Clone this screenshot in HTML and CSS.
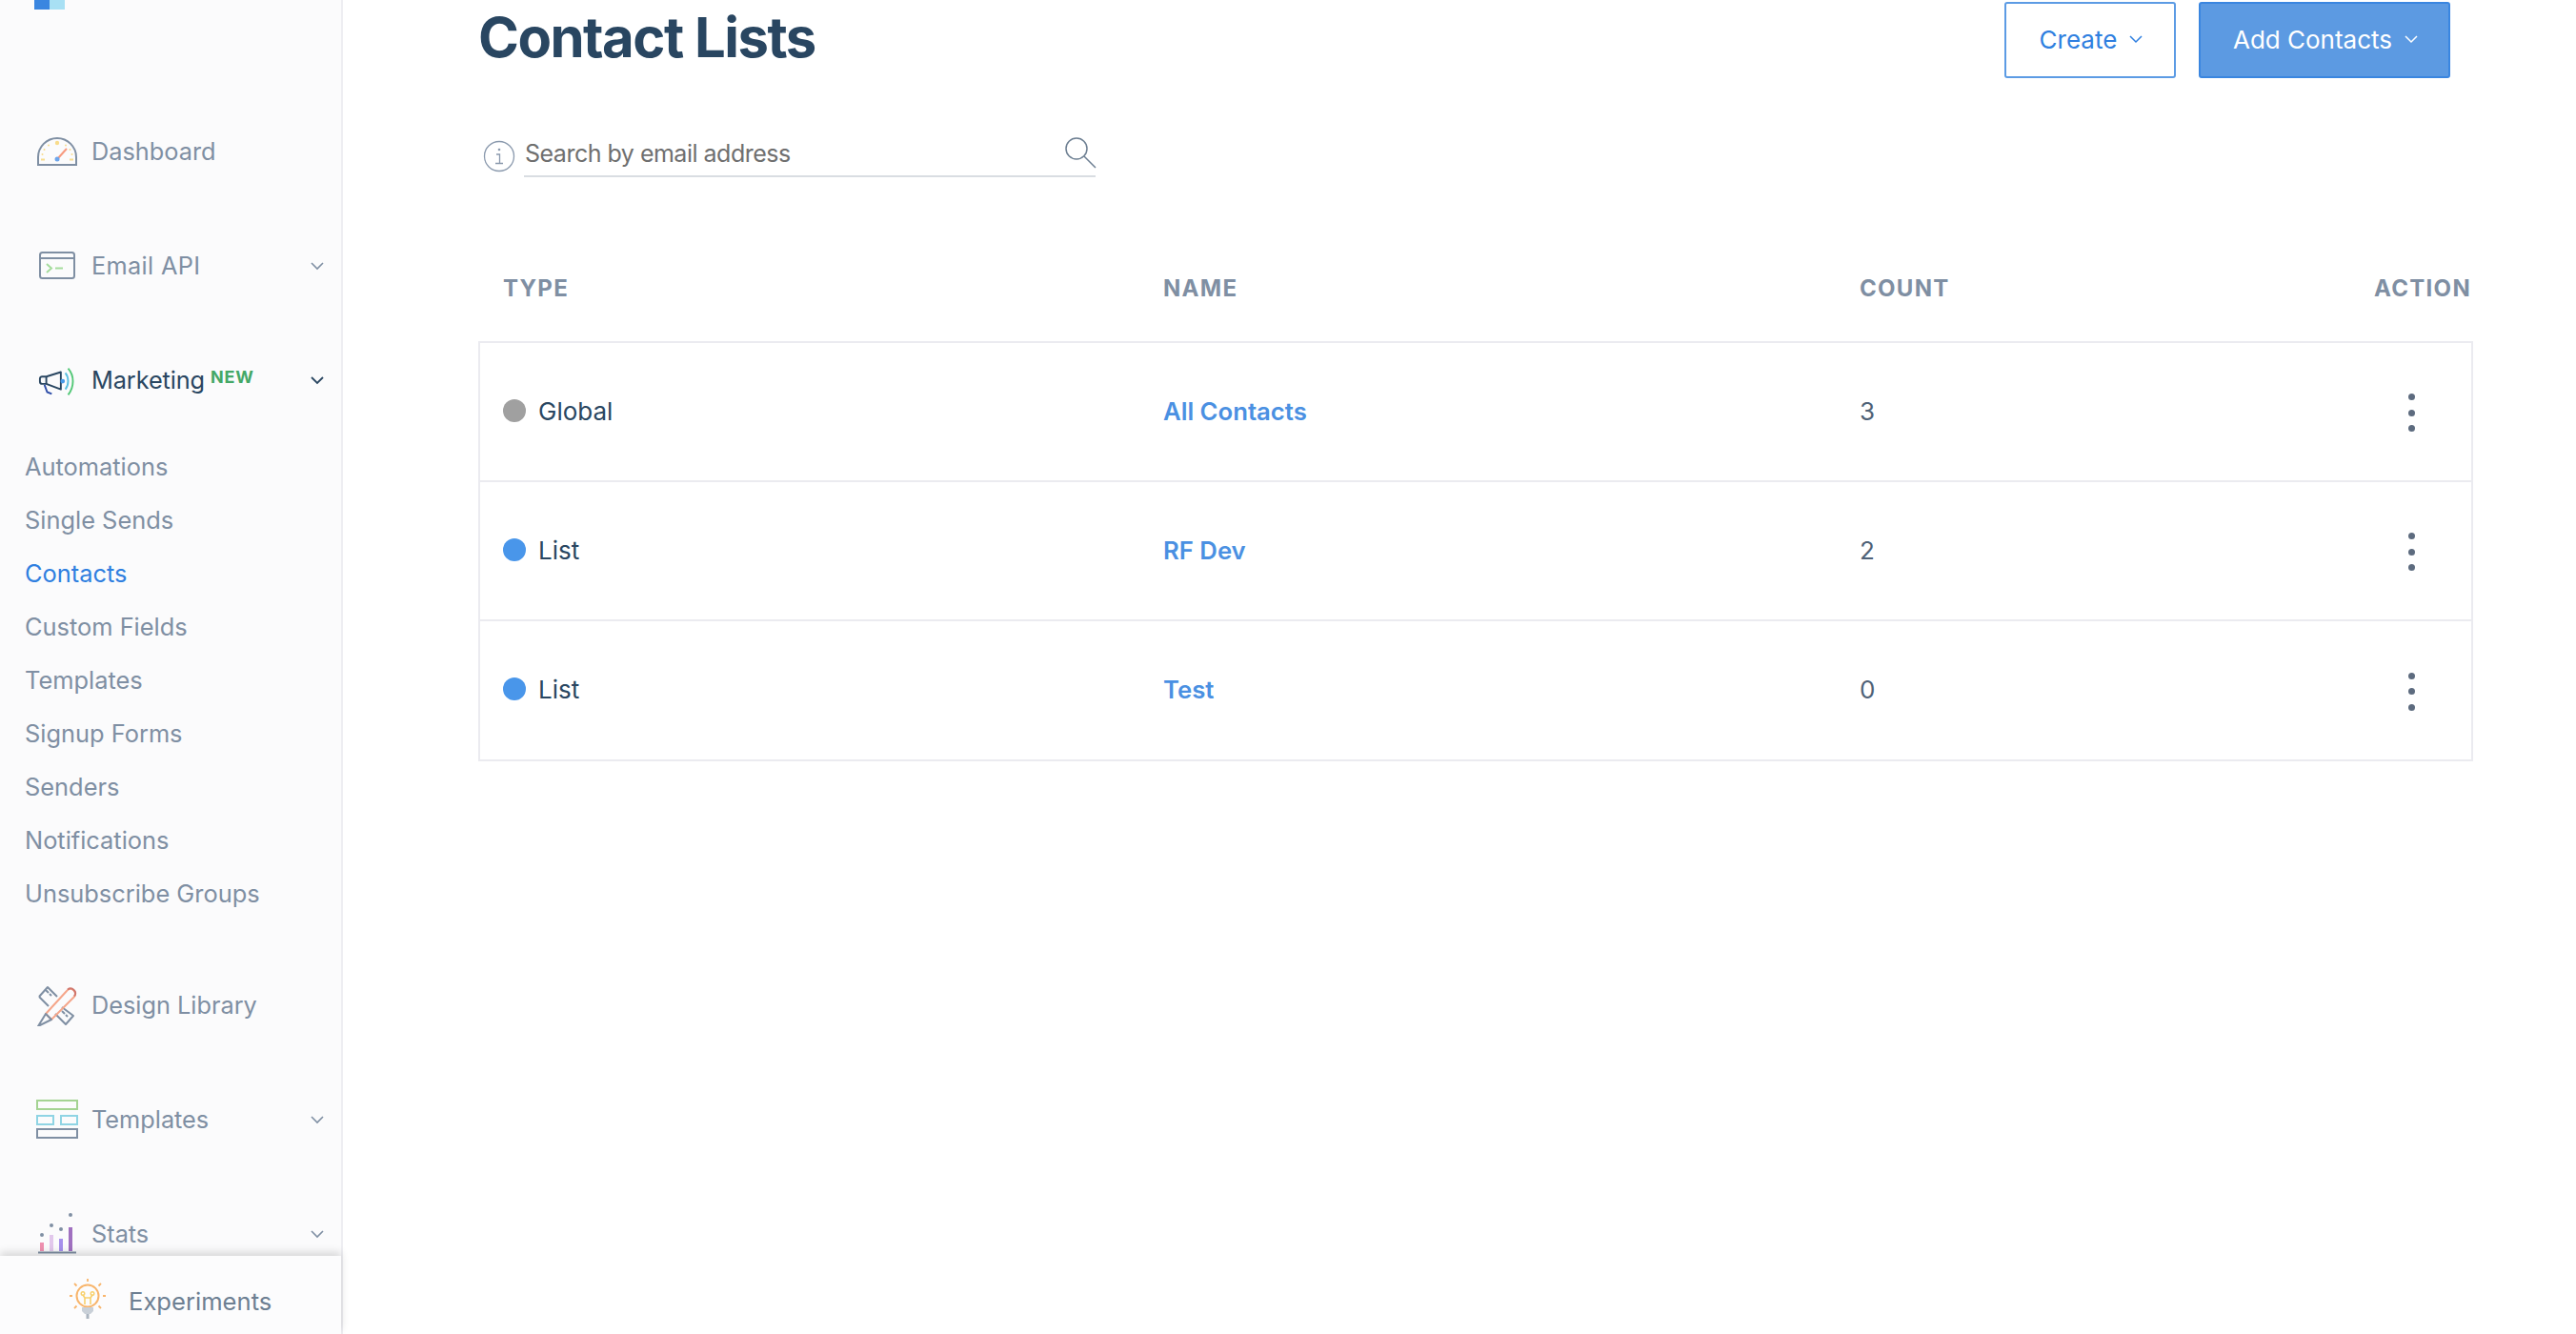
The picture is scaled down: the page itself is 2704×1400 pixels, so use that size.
FILE: index.html
```html
<!DOCTYPE html>
<html lang="en">
<head>
<meta charset="utf-8">
<title>Contact Lists</title>
<link rel="stylesheet" href="styles.css">
</head>
<body>
<div class="app">
  <aside class="sidebar">
    <div class="logo"><span class="logo-a"></span><span class="logo-b"></span></div>
    <nav class="nav">
      <a class="nav-row">
        <span class="nav-icon"><svg width="44" height="32" viewBox="0 0 44 32" fill="none"><path d="M2 30V22A20 20 0 0 1 42 22V30Z" stroke="#7f8fa3" stroke-width="2"/><circle cx="22" cy="7" r="2.2" fill="#f8dc8c"/><g fill="#f8dc8c"><circle cx="13" cy="9.5" r="1"/><circle cx="31" cy="9.500" r="1"/><circle cx="8.500" cy="14" r="1"/><circle cx="35.500" cy="14" r="1"/><circle cx="6.500" cy="19" r="1"/><circle cx="37.500" cy="19" r="1"/><rect x="5" y="23.500" width="4" height="2"/><rect x="35" y="23.500" width="4" height="2"/></g><path d="M23 23L32 13" stroke="#f79a7f" stroke-width="2"/><circle cx="22" cy="24" r="2.500" fill="#6ea6ec"/></svg></span>
        <span class="nav-label">Dashboard</span>
      </a>
      <a class="nav-row">
        <span class="nav-icon"><svg width="44" height="32" viewBox="0 0 44 32" fill="none"><rect x="4" y="2" width="36" height="27" rx="2.500" stroke="#7f8fa3" stroke-width="2"/><path d="M4 8H40" stroke="#7f8fa3" stroke-width="2"/><path d="M11 14L16 18.500L11 23" stroke="#a5dc9c" stroke-width="2"/><path d="M20 18.500H28" stroke="#a5dc9c" stroke-width="2"/></svg></span>
        <span class="nav-label nav-label-api">Email API</span>
        <svg class="chev" width="14" height="9" viewBox="0 0 14 9" fill="none"><path d="M1 1L7 7L13 1" stroke="#7f8fa3" stroke-width="1.600"/></svg>
      </a>
      <a class="nav-row">
        <span class="nav-icon nav-icon-megaphone"><svg width="44" height="32" viewBox="0 0 44 32" fill="none"><path d="M25 5V24L9 18H4.500A2.500 2.500 0 0 1 2 15.500V12A2.500 2.500 0 0 1 4.500 10H9Z" stroke="#294661" stroke-width="2" stroke-linejoin="round"/><path d="M9 10V18" stroke="#294661" stroke-width="2"/><path d="M7 19L10 27L15 29" stroke="#2d4da8" stroke-width="2"/><circle cx="27" cy="15" r="2.500" fill="#4a9ae8"/><path d="M30 6C34 11 34 19 30 24" stroke="#5cc0e0" stroke-width="2"/><path d="M33 1C40 9 40 21 33 30" stroke="#54c878" stroke-width="2"/></svg></span>
        <span class="nav-label nav-label-active">Marketing</span><span class="badge">NEW</span>
        <svg class="chev" width="14" height="9" viewBox="0 0 14 9" fill="none"><path d="M1 1L7 7L13 1" stroke="#294661" stroke-width="1.800"/></svg>
      </a>
      <ul class="subnav">
        <li>Automations</li>
        <li>Single Sends</li>
        <li class="subnav-current">Contacts</li>
        <li>Custom Fields</li>
        <li>Templates</li>
        <li>Signup Forms</li>
        <li>Senders</li>
        <li>Notifications</li>
        <li>Unsubscribe Groups</li>
      </ul>
      <a class="nav-row">
        <span class="nav-icon"><svg width="44" height="44" viewBox="0 0 44 44" fill="none"><path d="M3 13L12 3L22 13M27 24L39 33L31 42L20 31M3 13L13 23" stroke="#7f8fa3" stroke-width="2" stroke-linejoin="round"/><path d="M10 6L13 9M14 10L16 12M31 32L33 34M27 28L30 31" stroke="#7f8fa3" stroke-width="2"/><path d="M10 31L32 7A4.500 4.500 0 0 1 40 13L16 37Z" stroke="#f5a68a" stroke-width="2" stroke-linejoin="round"/><path d="M33 5.500A5 5 0 0 1 40 12.500" stroke="#d0766c" stroke-width="2"/><path d="M10 31L2 44L16 37Z" stroke="#7f8fa3" stroke-width="2" stroke-linejoin="round"/></svg></span>
        <span class="nav-label">Design Library</span>
      </a>
      <a class="nav-row">
        <span class="nav-icon"><svg width="44" height="42" viewBox="0 0 44 42" fill="none"><rect x="1" y="1" width="42" height="9" stroke="#a4d392" stroke-width="2"/><rect x="1" y="17" width="17" height="9" stroke="#8fd4e4" stroke-width="2"/><rect x="26" y="17" width="17" height="9" stroke="#8fd4e4" stroke-width="2"/><rect x="1" y="31" width="42" height="9" stroke="#7f8fa3" stroke-width="2"/></svg></span>
        <span class="nav-label">Templates</span>
        <svg class="chev" width="14" height="9" viewBox="0 0 14 9" fill="none"><path d="M1 1L7 7L13 1" stroke="#7f8fa3" stroke-width="1.600"/></svg>
      </a>
      <a class="nav-row">
        <span class="nav-icon"><svg width="44" height="44" viewBox="0 0 44 44" fill="none"><rect x="4" y="31" width="4" height="9" fill="#ef90b0"/><rect x="14" y="23" width="4" height="17" fill="#e2c8ec"/><rect x="24" y="27" width="4" height="13" fill="#a690ec"/><rect x="34" y="15" width="4" height="25" fill="#a070c0"/><path d="M2 41.500H42" stroke="#7f8fa3" stroke-width="2"/><g fill="#7f8fa3"><circle cx="6" cy="23" r="2"/><circle cx="16" cy="13" r="2"/><circle cx="26" cy="17" r="2"/><circle cx="36" cy="2" r="2"/></g></svg></span>
        <span class="nav-label">Stats</span>
        <svg class="chev" width="14" height="9" viewBox="0 0 14 9" fill="none"><path d="M1 1L7 7L13 1" stroke="#7f8fa3" stroke-width="1.600"/></svg>
      </a>
    </nav>
    <div class="experiments">
      <svg width="38" height="42" viewBox="0 0 38 42" fill="none"><circle cx="19" cy="18" r="11.500" stroke="#f8b56c" stroke-width="2"/><path d="M19 0V3M5 5L7.500 7.500M33 5L30.500 7.500M0 18H3M35 18H38M5 31L7.500 28.500M33 31L30.500 28.500" stroke="#f8b56c" stroke-width="1.800"/><path d="M16 27V20L14 17M22 27V20L24 17M16 20H22" stroke="#f8d06c" stroke-width="1.600"/><circle cx="14" cy="15.500" r="1.800" stroke="#f8d06c" stroke-width="1.400"/><circle cx="24" cy="15.500" r="1.800" stroke="#f8d06c" stroke-width="1.400"/><path d="M13 30H25V34L22 37H16L13 34Z" fill="#c9d0d8"/><rect x="17.500" y="37" width="3" height="5" fill="#aab4bf"/></svg>
      <span class="experiments-label">Experiments</span>
    </div>
  </aside>
  <main class="main">
    <header class="page-head">
      <h1 class="title">Contact Lists</h1>
      <div class="actions">
        <button class="btn btn-outline">Create<svg width="14" height="9" viewBox="0 0 14 9" fill="none"><path d="M1 1L7 7L13 1" stroke="#2f7fe0" stroke-width="1.500"/></svg></button>
        <button class="btn btn-primary">Add Contacts<svg width="14" height="9" viewBox="0 0 14 9" fill="none"><path d="M1 1L7 7L13 1" stroke="#fff" stroke-width="1.500"/></svg></button>
      </div>
    </header>
    <div class="search-row">
      <svg class="info" width="34" height="34" viewBox="0 0 34 34" fill="none"><circle cx="17" cy="17" r="15.500" stroke="#8a99ad" stroke-width="1.300"/><circle cx="17" cy="10" r="1.300" fill="#8a99ad"/><path d="M14 15H17.500V24M13 24.500H21" stroke="#8a99ad" stroke-width="1.300"/></svg>
      <div class="search-field">
        <span class="search-text">Search by email address</span>
        <svg width="34" height="34" viewBox="0 0 34 34" fill="none"><circle cx="13" cy="13" r="11" stroke="#6d7f92" stroke-width="1.500"/><path d="M21 21L33 33" stroke="#6d7f92" stroke-width="1.500"/></svg>
      </div>
    </div>
    <div class="table-head">
      <span>Type</span><span>Name</span><span>Count</span><span class="th-action">Action</span>
    </div>
    <div class="table">
      <div class="row">
        <span class="type"><i class="dot dot-global"></i>Global</span>
        <a class="name">All Contacts</a>
        <span class="count">3</span>
        <span class="kebab"><i></i><i></i><i></i></span>
      </div>
      <div class="row">
        <span class="type"><i class="dot dot-list"></i>List</span>
        <a class="name">RF Dev</a>
        <span class="count">2</span>
        <span class="kebab"><i></i><i></i><i></i></span>
      </div>
      <div class="row">
        <span class="type"><i class="dot dot-list"></i>List</span>
        <a class="name">Test</a>
        <span class="count">0</span>
        <span class="kebab"><i></i><i></i><i></i></span>
      </div>
    </div>
  </main>
</div>
</body>
</html>
```
FILE: styles.css
```css
* { box-sizing: border-box; }
html, body { margin: 0; height: 100%; background: #fff; overflow: hidden; }
body { font-family: Inter, "Liberation Sans", sans-serif; color: #294661; }
.app { display: flex; height: 1400px; }

.sidebar { width: 360px; height: 1400px; flex: none; display: flex; flex-direction: column; background: #fbfbfc; border-right: 2px solid #eeeef2; }
.logo { display: flex; height: 10px; padding-left: 36px; flex: none; }
.logo-a { width: 16px; background: #3a86e0; }
.logo-b { width: 16px; background: #a8e0f4; }
.nav { flex: 1; min-height: 0; overflow: hidden; padding-top: 89px; }
.nav-row { display: flex; align-items: center; height: 120px; padding-left: 38px; color: #7f8fa3; position: relative; }
.nav-icon { width: 44px; margin-right: 14px; display: flex; justify-content: center; flex: none; }
.nav-icon-megaphone { padding: 4px 0 0 2px; }
.nav-label { font-size: 25.3px; line-height: 32px; margin-top: -1px; }
.nav-label-api { letter-spacing: .35px; }
.nav-label-active { color: #294661; letter-spacing: -.1px; }
.badge { font-size: 18px; font-weight: 700; letter-spacing: .8px; color: #44a867; margin-left: 6px; margin-top: -8px; }
.chev { margin-left: auto; margin-right: 18px; flex: none; }
.subnav { list-style: none; margin: 3px 0 29px; padding: 0 0 0 26px; font-size: 25.4px; color: #7f8fa3; }
.subnav li { height: 56px; line-height: 56px; }
.subnav .subnav-current { color: #2f7fe0; }
.experiments { height: 82px; flex: none; display: flex; align-items: center; padding: 8px 0 0 73px; background: #fcfcfd; box-shadow: 0 -4px 8px rgba(0, 0, 0, .14); position: relative; }
.experiments-label { font-size: 25.6px; color: #6d7f92; margin: 4px 0 0 24px; }

.main { flex: 1; min-width: 0; padding: 2px 108px 0 142px; }
.page-head { display: flex; justify-content: space-between; align-items: center; height: 80px; }
.title { margin: 0; font-size: 58px; font-weight: 700; letter-spacing: -1.5px; color: #294661; line-height: 80px; margin-top: -6px; }
.actions { display: flex; gap: 24px; margin-right: 24px; }
.btn { height: 80px; font: 400 26px Inter, "Liberation Sans", sans-serif; border-radius: 3px; display: flex; align-items: center; justify-content: center; gap: 13px; padding: 0 0 2px 2px; }
.btn-outline { width: 180px; background: #fff; border: 2px solid #5c9be4; color: #2f7fe0; }
.btn-primary { width: 264px; background: #5c9ae2; border: 2px solid #3a86e0; color: #fff; }

.search-row { display: flex; align-items: flex-end; margin-top: 60px; margin-left: 5px; }
.info { margin-right: 9px; margin-bottom: 5px; }
.search-field { width: 600px; height: 44px; display: flex; align-items: flex-start; justify-content: space-between; border-bottom: 2px solid #d9dde2; }
.search-text { font-size: 25px; letter-spacing: -.5px; line-height: 38px; color: #6f6f6f; margin-left: 1px; }
.search-field svg { margin: 1px -1px 0 0; }

.table-head { display: grid; grid-template-columns: 693px 731px 1fr auto; margin-top: 96px; height: 40px; align-items: center; padding: 0 2px 0 26px; font-size: 24px; font-weight: 700; letter-spacing: 1.3px; text-transform: uppercase; color: #7f8fa3; }
.table { margin-top: 36px; border: 2px solid #ebebf0; }
.row { display: grid; grid-template-columns: 693px 731px 1fr auto; align-items: center; height: 146px; padding: 0 59px 0 24px; border-bottom: 2px solid #ebebf0; font-size: 26px; line-height: 32px; }
.row:last-child { height: 145px; border-bottom: 0; }
.type { display: flex; align-items: center; gap: 13px; margin-top: -1px; }
.dot { width: 24px; height: 24px; border-radius: 50%; flex: none; margin-top: -2px; }
.dot-global { background: #a0a0a0; }
.dot-list { background: #4996ea; }
.name { font-weight: 600; font-size: 25.7px; color: #4a90e2; margin-top: -1px; }
.count { color: #4f6277; margin-top: -1px; }
.kebab { display: flex; flex-direction: column; gap: 9.5px; margin-top: 2px; }
.kebab i { width: 7px; height: 7px; border-radius: 50%; background: #5d6b7f; }
```
